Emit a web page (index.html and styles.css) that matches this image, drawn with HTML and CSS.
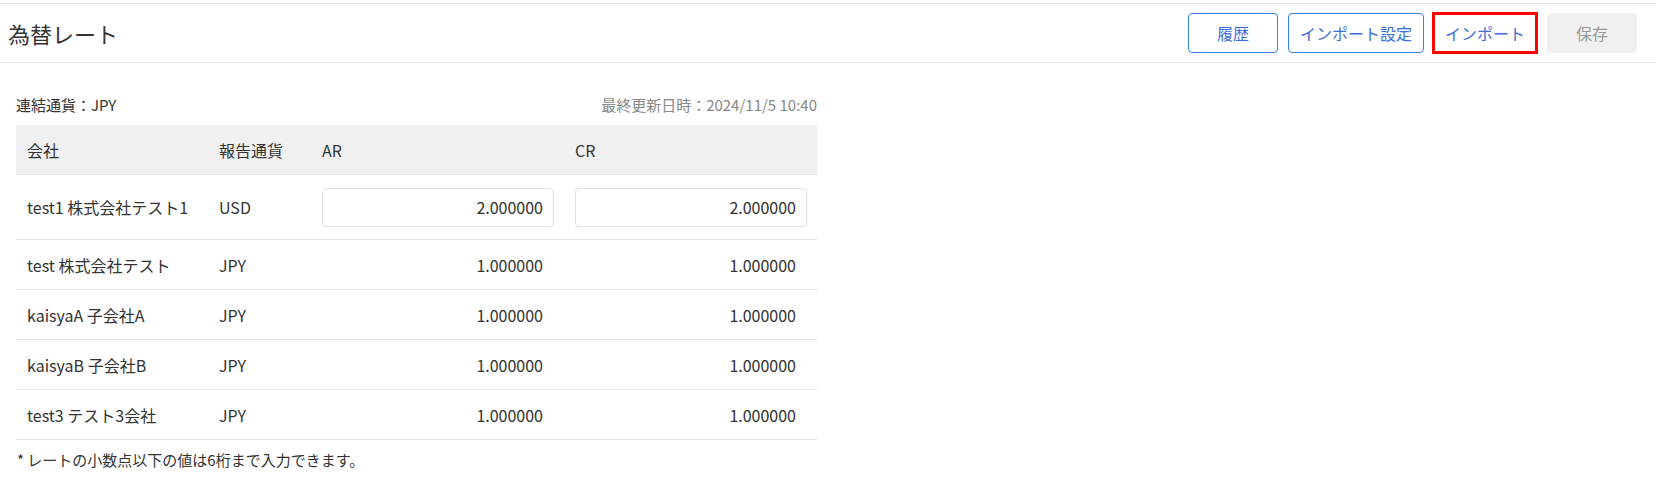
FILE: index.html
```html
<!DOCTYPE html>
<html lang="ja">
<head>
<meta charset="utf-8">
<title>為替レート</title>
<link rel="stylesheet" href="styles.css">
</head>
<body>
<div class="page">
  <header class="topbar">
    <h1 class="title">為替レート</h1>
    <div class="actions">
      <button class="btn btn-outline">履歴</button>
      <button class="btn btn-outline">インポート設定</button>
      <button class="btn btn-outline btn-highlight">インポート</button>
      <button class="btn btn-disabled">保存</button>
    </div>
  </header>
  <main class="content">
    <div class="meta">
      <span>連結通貨：JPY</span>
      <span class="updated">最終更新日時：2024/11/5 10:40</span>
    </div>
    <div class="table">
      <div class="row head">
        <div class="cell">会社</div>
        <div class="cell">報告通貨</div>
        <div class="cell">AR</div>
        <div class="cell">CR</div>
      </div>
      <div class="row edit">
        <div class="cell">test1 株式会社テスト1</div>
        <div class="cell">USD</div>
        <div class="cell"><input class="rate" type="text" value="2.000000"></div>
        <div class="cell"><input class="rate" type="text" value="2.000000"></div>
      </div>
      <div class="row">
        <div class="cell">test 株式会社テスト</div>
        <div class="cell">JPY</div>
        <div class="cell num">1.000000</div>
        <div class="cell num">1.000000</div>
      </div>
      <div class="row">
        <div class="cell">kaisyaA 子会社A</div>
        <div class="cell">JPY</div>
        <div class="cell num">1.000000</div>
        <div class="cell num">1.000000</div>
      </div>
      <div class="row">
        <div class="cell">kaisyaB 子会社B</div>
        <div class="cell">JPY</div>
        <div class="cell num">1.000000</div>
        <div class="cell num">1.000000</div>
      </div>
      <div class="row">
        <div class="cell">test3 テスト3会社</div>
        <div class="cell">JPY</div>
        <div class="cell num">1.000000</div>
        <div class="cell num">1.000000</div>
      </div>
    </div>
    <p class="note">* レートの小数点以下の値は6桁まで入力できます。</p>
  </main>
</div>
</body>
</html>
```
FILE: styles.css
```css
* { box-sizing: border-box; }
html, body { margin: 0; padding: 0; background: #fff; }
body {
  font-family: "Noto Sans CJK JP", "Noto Sans", sans-serif;
  color: #333;
}
.page { padding-top: 3px; }
.topbar {
  height: 60px;
  border-top: 1px solid #e3e3e3;
  border-bottom: 1px solid #e3e3e3;
  display: flex;
  align-items: center;
  justify-content: space-between;
  padding: 0 19px 0 8px;
}
.title {
  margin: 0;
  font-size: 22px;
  font-weight: 400;
  color: #333;
}
.actions { display: flex; align-items: center; }
.btn {
  font-family: inherit;
  font-size: 16px;
  height: 40px;
  min-width: 90px;
  padding: 0 11px;
  border-radius: 4px;
  background: #fff;
  cursor: pointer;
}
.btn + .btn { margin-left: 10px; }
.btn-outline {
  border: 1px solid #3d7fe6;
  color: #3c6fd9;
}
.btn-highlight {
  border: 3px solid #f00;
  border-radius: 0;
  height: 42px;
  padding: 0 10px;
  margin-left: 8px !important;
}
.btn-disabled {
  border: 1px solid #f0f0f0;
  background: #f0f0f0;
  color: #999;
  margin-left: 9px !important;
}
.content { padding: 0 0 0 16px; width: 817px; }
.meta {
  display: flex;
  justify-content: space-between;
  font-size: 15px;
  height: 62px;
  align-items: flex-end;
  padding-bottom: 10px;
  line-height: 20px;
}
.updated { color: #888; }
.table { width: 801px; }
.row {
  display: grid;
  grid-template-columns: 192px 103px 253px 253px;
  height: 50px;
  border-bottom: 1px solid #e3e3e3;
  align-items: center;
  font-size: 16px;
}
.row.head { background: #f0f0f0; }
.row.edit { height: 65px; }
.cell { padding: 0 10px 0 11px; white-space: nowrap; }
.cell.num { text-align: right; padding-right: 21px; }
.rate {
  width: 100%;
  height: 39px;
  border: 1px solid #e0e0e0;
  border-radius: 4px;
  text-align: right;
  padding: 0 10px;
  font-family: inherit;
  font-size: 16px;
  color: #333;
  background: #fff;
}
.note {
  margin: 10px 0 0 1px;
  font-size: 15px;
  line-height: 20px;
}
```
